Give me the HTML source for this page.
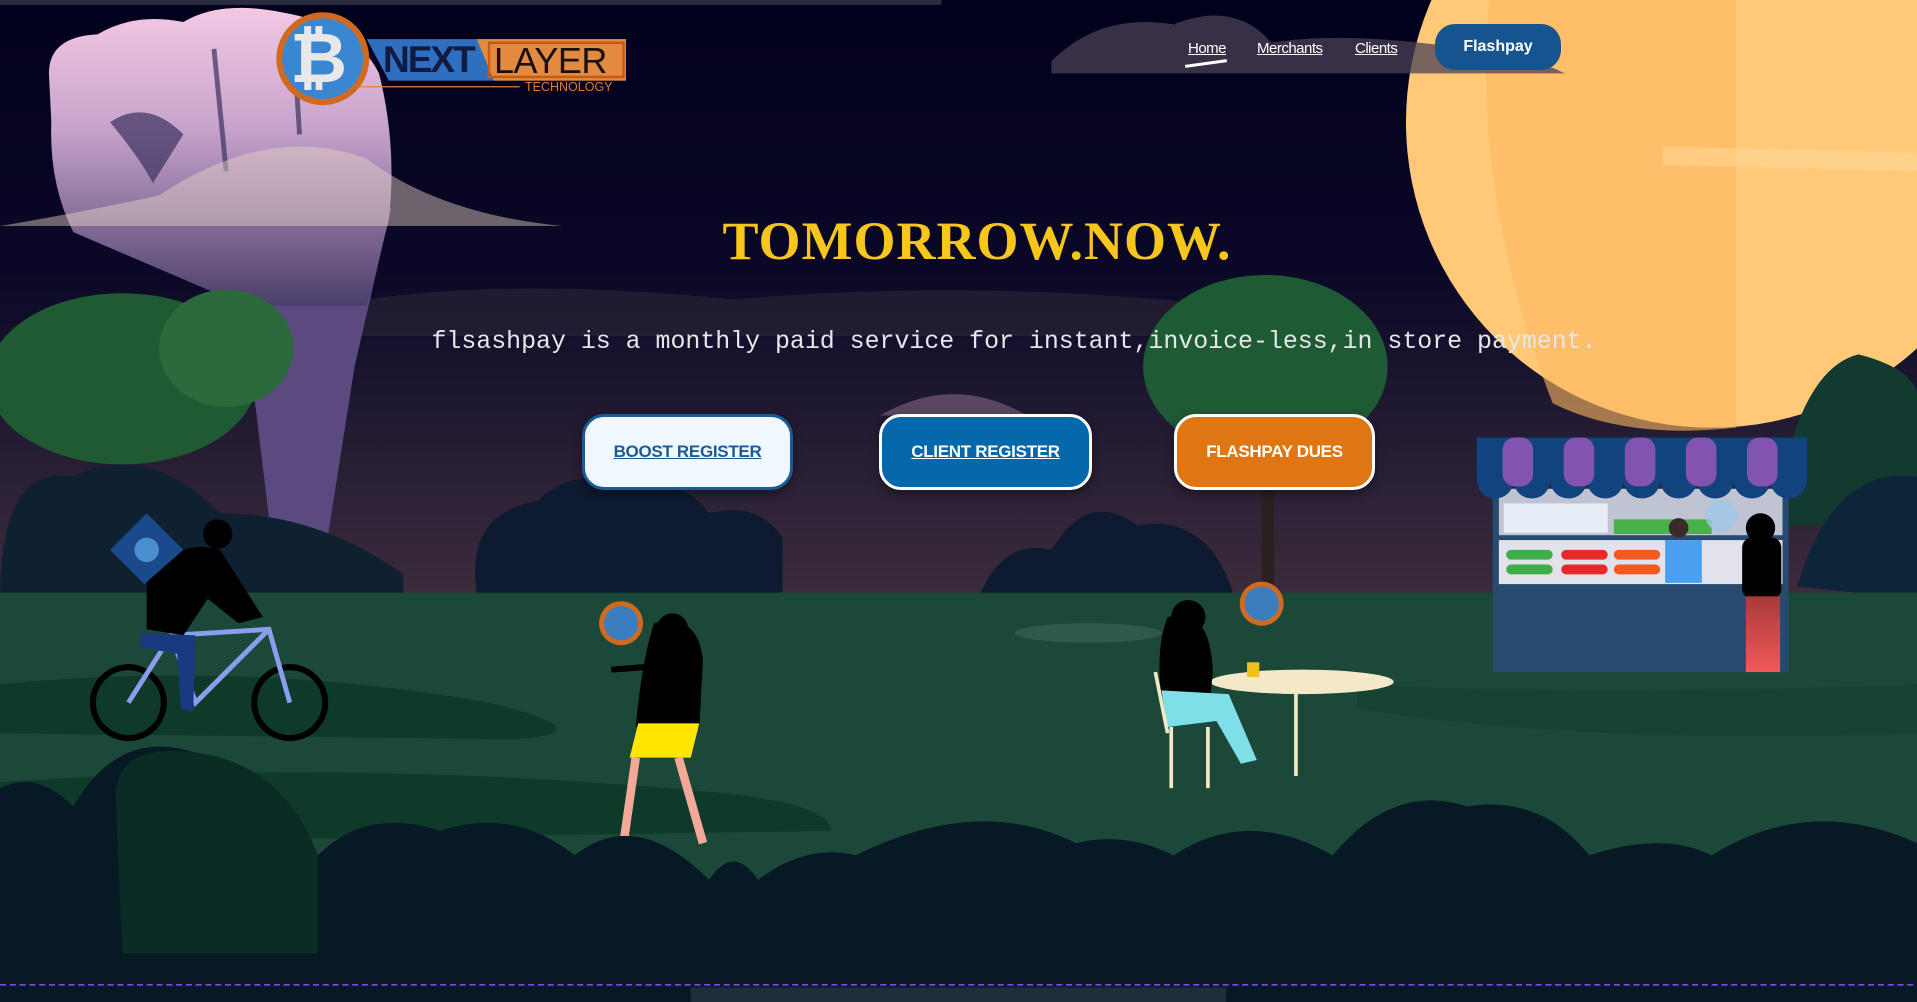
<!DOCTYPE html>
<html><head><meta charset="utf-8"><style>
html,body{margin:0;padding:0;width:1917px;height:1002px;overflow:hidden;background:#081926;}
#bg{position:absolute;left:0;top:0;width:1917px;height:1002px;}
.nav{position:absolute;top:40px;font:15px "Liberation Sans",sans-serif;color:#fff;text-decoration:underline;letter-spacing:-0.5px;}
.fp{position:absolute;left:1435px;top:24px;width:126px;height:46px;border-radius:20px;background:#16548f;color:#fff;font:bold 16px "Liberation Sans",sans-serif;display:flex;align-items:center;justify-content:center;}
h1{position:absolute;left:0;width:1954px;top:210px;margin:0;text-align:center;font:bold 54px "Liberation Serif",serif;color:#f6c61c;letter-spacing:1px;}
.sub{position:absolute;left:0;width:2028px;top:328px;text-align:center;font:24.9px "Liberation Mono",monospace;color:#e6e6ea;white-space:nowrap;}
.btn{position:absolute;top:414px;height:76px;border-radius:22px;display:flex;align-items:center;justify-content:center;font:bold 17px "Liberation Sans",sans-serif;box-sizing:border-box;box-shadow:0 4px 10px rgba(0,0,0,.4);letter-spacing:-0.3px;}
</style></head><body>
<svg id="bg" viewBox="0 0 1568 820" preserveAspectRatio="none" xmlns="http://www.w3.org/2000/svg">
<defs>
<linearGradient id="sky" x1="0" y1="0" x2="0" y2="1"><stop offset="0" stop-color="#02011c"/><stop offset=".45" stop-color="#0a0826"/><stop offset=".7" stop-color="#211a32"/><stop offset="1" stop-color="#3c2c3c"/></linearGradient>
<linearGradient id="fist" x1="0" y1="0" x2="0" y2="1"><stop offset="0" stop-color="#f4c8e4"/><stop offset=".4" stop-color="#c8a4cc"/><stop offset="1" stop-color="#4a3e6a"/></linearGradient>
<linearGradient id="pants" x1="0" y1="0" x2="0" y2="1"><stop offset="0" stop-color="#a83a3a"/><stop offset="1" stop-color="#f25858"/></linearGradient>
</defs>
<rect width="1568" height="490" fill="url(#sky)"/>
<!-- clouds -->
<path d="M270 250 Q400 225 600 245 Q800 228 1000 250 L1000 275 L270 275Z" fill="#2a2236" opacity=".7"/>
<path d="M720 340 Q780 305 840 340Z" fill="#5a4660"/>
<!-- moon -->
<circle cx="1400" cy="100" r="250" fill="#ffc978"/>
<path d="M1220 -20 Q1200 150 1270 330 Q1330 360 1420 350 L1420 -20Z" fill="#ffb860" opacity=".6"/>
<path d="M1360 120 L1568 125 L1568 140 L1360 135Z" fill="#ffe0a8" opacity=".4"/>
<!-- nav cloud -->
<path d="M860 50 Q900 10 960 20 Q1010 0 1040 35 Q1100 25 1200 40 Q1250 45 1280 60 L860 60Z" fill="#4a4054" opacity=".75"/>
<!-- fist / arm -->
<path d="M200 180 L320 170 L290 300 L268 440 L222 440 L205 300Z" fill="#5a4a80"/>
<path d="M40 60 Q40 30 80 28 Q110 10 150 18 Q180 0 230 10 Q290 20 310 60 Q325 120 318 180 L300 250 L200 250 L60 190 Q40 150 42 100Z" fill="url(#fist)"/>
<path d="M90 100 Q120 80 150 110 L125 150 Q115 130 90 100Z" fill="#3a3060" opacity=".7"/>
<path d="M175 40 L185 140 M240 30 L245 110" stroke="#3a3060" stroke-width="4" fill="none" opacity=".7"/>
<path d="M0 185 Q60 175 130 160 Q220 100 300 130 Q360 175 460 185Z" fill="#e8d4c8" opacity=".45"/>
<!-- trees -->
<ellipse cx="100" cy="310" rx="110" ry="70" fill="#1f5a33"/>
<ellipse cx="185" cy="285" rx="55" ry="48" fill="#2c6a3c"/>
<ellipse cx="1035" cy="300" rx="100" ry="75" fill="#1e5a34"/>
<rect x="1032" y="360" width="10" height="140" fill="#2a2020"/>
<path d="M1460 380 Q1480 300 1520 290 Q1560 300 1568 320 L1568 430 L1460 430Z" fill="#123a30"/>
<!-- distant bushes -->
<path d="M390 485 Q380 420 440 410 Q470 380 510 400 Q560 390 580 420 Q620 410 640 440 L640 490 L390 490Z" fill="#0d1a30"/>
<path d="M800 490 Q820 440 860 450 Q890 400 930 430 Q990 420 1010 490Z" fill="#0d1a30"/>
<path d="M0 490 Q0 380 60 390 Q120 360 180 420 Q260 420 330 470 L330 490Z" fill="#0f2030"/>
<path d="M1470 480 Q1500 380 1568 390 L1568 490Z" fill="#0e2438"/>
<!-- ground -->
<rect y="485" width="1568" height="335" fill="#1b4838"/>
<ellipse cx="890" cy="518" rx="60" ry="8" fill="#2f5a4a"/>
<path d="M0 560 Q200 540 400 575 Q500 600 420 605 L0 600Z" fill="#0f3a2a"/>
<path d="M0 640 Q300 620 600 650 Q680 660 680 680 L0 690Z" fill="#0f3a2a"/>
<path d="M1110 560 Q1300 570 1568 560 L1568 600 Q1300 610 1110 580Z" fill="#144032" opacity=".7"/>
<!-- stall -->
<rect x="1221" y="400" width="242" height="150" fill="#274b6e"/>
<rect x="1226" y="400" width="232" height="38" fill="#bfc3d2"/>
<rect x="1226" y="442" width="232" height="36" fill="#e2e2ea"/>
<rect x="1230" y="412" width="85" height="24" fill="#e8eef8"/>
<rect x="1320" y="425" width="80" height="12" fill="#4ab04a"/>
<rect x="1232" y="450" width="38" height="8" rx="4" fill="#3fae4a"/><rect x="1232" y="462" width="38" height="8" rx="4" fill="#3fae4a"/>
<rect x="1277" y="450" width="38" height="8" rx="4" fill="#e62a2a"/><rect x="1277" y="462" width="38" height="8" rx="4" fill="#e62a2a"/>
<rect x="1320" y="450" width="38" height="8" rx="4" fill="#f25a20"/><rect x="1320" y="462" width="38" height="8" rx="4" fill="#f25a20"/>
<path d="M1205 358 h273 v35 a15 15 0 0 1 -30 0 a15 15 0 0 1 -30 0 a15 15 0 0 1 -30 0 a15 15 0 0 1 -30 0 a15 15 0 0 1 -30 0 a15 15 0 0 1 -30 0 a15 15 0 0 1 -30 0 a15 15 0 0 1 -30 0 a15 15 0 0 1 -30 0 v-35Z" fill="#11437f"/>
<rect x="1229" y="358" width="25" height="40" rx="10" fill="#8353b2"/><rect x="1279" y="358" width="25" height="40" rx="10" fill="#8353b2"/><rect x="1329" y="358" width="25" height="40" rx="10" fill="#8353b2"/><rect x="1379" y="358" width="25" height="40" rx="10" fill="#8353b2"/><rect x="1429" y="358" width="25" height="40" rx="10" fill="#8353b2"/>
<rect x="1362" y="442" width="30" height="35" fill="#4a9ff0"/><circle cx="1373" cy="432" r="8" fill="#3a2a2a"/>
<circle cx="1440" cy="432" r="12" fill="#000"/><rect x="1425" y="440" width="32" height="50" rx="8" fill="#000"/>
<rect x="1428" y="488" width="28" height="62" fill="url(#pants)"/>
<circle cx="1408" cy="422" r="13" fill="#9fc8ea" opacity=".8"/>
<!-- cyclist -->
<g fill="none" stroke="#000" stroke-width="5"><circle cx="105" cy="575" r="29"/><circle cx="237" cy="575" r="29"/></g>
<path d="M105 575 L140 520 L220 515 L237 575 M140 520 L160 575 L220 515" stroke="#8a9ef0" stroke-width="4" fill="none"/>
<path d="M120 470 Q150 440 180 450 L215 505 L195 510 L170 490 L150 520 L120 515Z" fill="#000"/>
<circle cx="178" cy="437" r="12" fill="#000"/>
<path d="M90 450 L120 420 L150 450 L118 478Z" fill="#1a4a8a"/><circle cx="120" cy="450" r="10" fill="#4a90d0"/>
<path d="M115 518 L160 520 L158 582 L148 580 L145 535 L115 530Z" fill="#173a80"/>
<!-- woman walking -->
<path d="M535 510 Q570 500 575 540 L572 595 L520 595 Q525 540 535 510Z" fill="#000"/>
<circle cx="550" cy="515" r="13" fill="#000"/>
<path d="M522 592 L572 592 L565 620 L515 620Z" fill="#ffe600"/>
<path d="M520 620 L510 690 M555 620 L575 690" stroke="#f4a898" stroke-width="7"/>
<path d="M540 545 L500 548" stroke="#000" stroke-width="5"/>
<circle cx="508" cy="510" r="18" fill="#d06a20"/><circle cx="508" cy="510" r="14" fill="#3a7ec0"/>
<!-- woman sitting -->
<ellipse cx="1065" cy="558" rx="75" ry="10" fill="#f3e8c8"/>
<line x1="1060" y1="562" x2="1060" y2="635" stroke="#f3e8c8" stroke-width="3"/>
<path d="M955 505 Q990 495 992 550 L990 570 L950 570 Q945 530 955 505Z" fill="#000"/>
<circle cx="972" cy="505" r="14" fill="#000"/>
<path d="M950 565 L1005 568 L1028 622 L1015 625 L995 590 L955 595Z" fill="#7fdfe8"/>
<path d="M945 550 L955 600 M958 595 L958 645 M988 595 L988 645" stroke="#f3e8c8" stroke-width="3"/>
<rect x="1020" y="542" width="10" height="12" fill="#f0c020"/>
<circle cx="1032" cy="494" r="18" fill="#d06a20"/><circle cx="1032" cy="494" r="14" fill="#3a7ec0"/>
<!-- foreground bushes -->
<path d="M0 820 L0 645 Q30 630 60 660 Q100 590 170 620 Q230 640 260 700 Q300 660 360 680 Q420 660 470 700 Q520 660 580 720 Q600 690 620 720 Q660 690 700 700 Q800 650 880 690 Q920 680 960 700 Q1020 660 1090 700 Q1140 640 1200 660 Q1260 650 1300 700 Q1360 680 1400 700 Q1480 650 1568 690 L1568 820Z" fill="#081926"/>
<path d="M95 660 Q90 610 150 615 Q230 620 260 700 L260 780 L100 780Z" fill="#0a2c24"/>
<line x1="0" y1="806" x2="1568" y2="806" stroke="#8a4ef0" stroke-width="1.3" stroke-dasharray="5 3"/>
<rect x="565" y="808" width="438" height="12" fill="#1e2f3c"/>
<rect x="0" y="0" width="770" height="4" fill="#2a2a40"/>
<!-- logo -->
<path d="M300 32 L512 32 L512 66 L318 66Z" fill="#2e6fc0"/>
<path d="M390 32 L512 32 L512 66 L404 66Z" fill="#e28a40"/>
<rect x="400" y="35" width="110" height="28" fill="none" stroke="#c85a10" stroke-width="2"/>
<line x1="280" y1="71" x2="425" y2="71" stroke="#e08040" stroke-width="1"/>
<circle cx="264" cy="48" r="38" fill="#d06a20"/><circle cx="264" cy="48" r="33" fill="#3a86d0"/>
</svg>
<div style="position:absolute;left:290px;top:18px;font:bold 70px 'Liberation Sans',sans-serif;color:#e8e8ea;">₿</div>
<div style="position:absolute;left:383px;top:39px;font:bold 37px 'Liberation Sans',sans-serif;color:#111a40;letter-spacing:-2px;">NEXT</div>
<div style="position:absolute;left:494px;top:40px;font:36px 'Liberation Sans',sans-serif;color:#1a1010;letter-spacing:-0.5px;">LAYER</div>
<div style="position:absolute;left:525px;top:80px;font:12.5px 'Liberation Sans',sans-serif;color:#e07a30;">TECHNOLOGY</div>
<a class="nav" style="left:1188px">Home</a>
<div style="position:absolute;left:1185px;top:62px;width:42px;height:3px;background:#fff;transform:rotate(-8deg)"></div>
<a class="nav" style="left:1257px">Merchants</a>
<a class="nav" style="left:1355px">Clients</a>
<div class="fp">Flashpay</div>
<h1>TOMORROW.NOW.</h1>
<div class="sub">flsashpay is a monthly paid service for instant,invoice-less,in store payment.</div>
<div class="btn" style="left:582px;width:211px;background:#f0f8ff;border:3px solid #1c5a94;color:#1c5a94;text-decoration:underline;">BOOST REGISTER</div>
<div class="btn" style="left:879px;width:213px;background:#0468aa;border:3px solid #fff;color:#fff;text-decoration:underline;">CLIENT REGISTER</div>
<div class="btn" style="left:1174px;width:201px;background:#e07612;border:3px solid #fff;color:#fff;">FLASHPAY DUES</div>
</body></html>
